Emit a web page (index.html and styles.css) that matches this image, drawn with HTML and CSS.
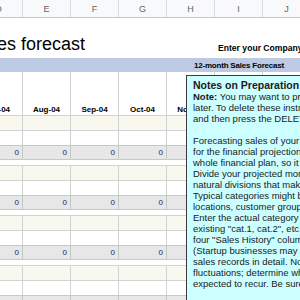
FILE: index.html
```html
<!DOCTYPE html>
<html>
<head>
<meta charset="utf-8">
<link rel="stylesheet" href="styles.css">
</head>
<body>
<div class="sheet">
  <div class="colheads">
    <span>D</span><span>E</span><span>F</span><span>G</span><span>H</span><span>I</span><span>J</span>
  </div>
  <div class="title-row">
    <span class="title">Sales forecast</span>
    <span class="company">Enter your Company Name here</span>
  </div>
  <div class="band"><span class="band-text">12-month Sales Forecast</span></div>
  <div class="row dates">
    <span>Jul-04</span><span>Aug-04</span><span>Sep-04</span><span>Oct-04</span><span>Nov-04</span><span>Dec-04</span><span>Jan-05</span>
  </div>

  <div class="row cream"><span></span><span></span><span></span><span></span><span></span><span></span><span></span></div>
  <div class="row plain"><span></span><span></span><span></span><span></span><span></span><span></span><span></span></div>
  <div class="row total"><span>0</span><span>0</span><span>0</span><span>0</span><span>0</span><span>0</span><span>0</span></div>
  <div class="gap"></div>

  <div class="row cream"><span></span><span></span><span></span><span></span><span></span><span></span><span></span></div>
  <div class="row plain"><span></span><span></span><span></span><span></span><span></span><span></span><span></span></div>
  <div class="row total"><span>0</span><span>0</span><span>0</span><span>0</span><span>0</span><span>0</span><span>0</span></div>
  <div class="gap"></div>

  <div class="row cream"><span></span><span></span><span></span><span></span><span></span><span></span><span></span></div>
  <div class="row plain"><span></span><span></span><span></span><span></span><span></span><span></span><span></span></div>
  <div class="row total"><span>0</span><span>0</span><span>0</span><span>0</span><span>0</span><span>0</span><span>0</span></div>
  <div class="gap"></div>

  <div class="row cream"><span></span><span></span><span></span><span></span><span></span><span></span><span></span></div>
  <div class="row plain"><span></span><span></span><span></span><span></span><span></span><span></span><span></span></div>
  <div class="row total"><span>0</span><span>0</span><span>0</span><span>0</span><span>0</span><span>0</span><span>0</span></div>
  <div class="gap"></div>
</div>

<div class="note">
  <div class="note-title">Notes on Preparation</div>
  <div class="note-body">
    <div><b>Note:</b> You may want to print these instructions for</div>
    <div>later. To delete these instructions, click here</div>
    <div>and then press the DELETE key.</div>
    <div>&nbsp;</div>
    <div>Forecasting sales of your business is important</div>
    <div>for the financial projections. It drives the</div>
    <div>whole financial plan, so it is worth doing well.</div>
    <div>Divide your projected monthly sales into</div>
    <div>natural divisions that make sense for you.</div>
    <div>Typical categories might be products, sales</div>
    <div>locations, customer groups, or channels.</div>
    <div>Enter the actual category names in place of the</div>
    <div>existing "cat.1, cat.2", etc. Then fill in the</div>
    <div>four "Sales History" columns with actual data.</div>
    <div>(Startup businesses may not have any past</div>
    <div>sales records in detail. Note any seasonal</div>
    <div>fluctuations; determine which are one-time or</div>
    <div>expected to recur. Be sure to include them.)</div>
  </div>
</div>
</body>
</html>
```

FILE: styles.css
```css
html, body {
  margin: 0;
  padding: 0;
}
body {
  width: 300px;
  height: 300px;
  overflow: hidden;
  position: relative;
  background: #ffffff;
  font-family: "Liberation Sans", Arial, sans-serif;
  color: #000;
}
.sheet {
  margin-left: -25px;
  width: 336px;
}
.colheads {
  display: grid;
  grid-template-columns: repeat(7, 48px);
  height: 18px;
  box-sizing: border-box;
  background: #f8f9fa;
  border-bottom: 1px solid #c4c7c9;
}
.colheads span {
  border-right: 1px solid #d9dbdd;
  display: flex;
  align-items: center;
  justify-content: center;
  font-size: 9px;
  color: #5f6368;
}
.title-row {
  display: grid;
  grid-template-columns: repeat(7, 48px);
  height: 40px;
}
.title {
  grid-column: 1 / 5;
  align-self: end;
  margin-left: -4px;
  font-size: 18px;
  line-height: 1;
  padding-bottom: 5px;
  white-space: nowrap;
}
.company {
  grid-column: 6 / 8;
  align-self: end;
  font-size: 8.6px;
  font-weight: bold;
  line-height: 1;
  padding-left: 3px;
  padding-bottom: 5px;
  white-space: nowrap;
}
.band {
  display: grid;
  grid-template-columns: repeat(7, 48px);
  height: 14px;
  background: #bccbe3;
}
.band-text {
  grid-column: 5 / 8;
  text-align: center;
  font-size: 8px;
  font-weight: bold;
  letter-spacing: -0.2px;
  line-height: 14px;
  padding-top: 1px;
  white-space: nowrap;
}
.row {
  display: grid;
  grid-template-columns: repeat(7, 48px);
  box-sizing: border-box;
}
.row span {
  border-right: 1px solid #d2d2d2;
}
.dates {
  height: 43px;
}
.dates span {
  display: flex;
  align-items: flex-end;
  justify-content: center;
  font-size: 8px;
  font-weight: bold;
  line-height: 10px;
  white-space: nowrap;
}
.cream {
  height: 15px;
  border-top: 1px solid #d2d2d2;
  background: #f9f8ef;
}
.plain {
  height: 15px;
  border-top: 1px solid #d2d2d2;
  background: #ffffff;
}
.total {
  height: 15px;
  border-top: 1px solid #c8c8c8;
  border-bottom: 1px solid #c8c8c8;
  background: #e7e7e7;
}
.total span {
  border-right-color: #c8c8c8;
  text-align: right;
  padding-right: 3px;
  font-size: 8px;
  line-height: 13px;
  color: #1d1d55;
}
.gap {
  height: 5px;
  background: #ffffff;
}
.note {
  position: absolute;
  left: 186px;
  top: 75px;
  width: 200px;
  height: 260px;
  box-sizing: border-box;
  background: #ccffff;
  border: 1px solid #3c3c3c;
  padding: 3px 0 0 6px;
  color: #1a1a1a;
  white-space: nowrap;
}
.note-title {
  font-size: 10.5px;
  font-weight: bold;
  line-height: 12px;
}
.note-body {
  font-size: 9.5px;
  line-height: 11px;
}
```
